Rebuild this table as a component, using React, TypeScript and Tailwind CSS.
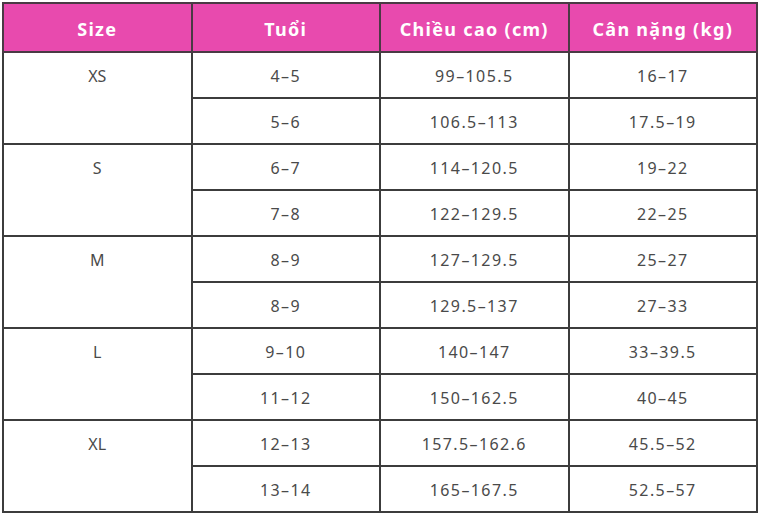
import React from "react";

const groups = [
  { size: "XS", rows: [["4-5", "99-105.5", "16-17"], ["5-6", "106.5-113", "17.5-19"]] },
  { size: "S", rows: [["6-7", "114-120.5", "19-22"], ["7-8", "122-129.5", "22-25"]] },
  { size: "M", rows: [["8-9", "127-129.5", "25-27"], ["8-9", "129.5-137", "27-33"]] },
  { size: "L", rows: [["9-10", "140-147", "33-39.5"], ["11-12", "150-162.5", "40-45"]] },
  { size: "XL", rows: [["12-13", "157.5-162.6", "45.5-52"], ["13-14", "165-167.5", "52.5-57"]] },
];

const headers = ["Size", "Tuổi", "Chiều cao (cm)", "Cân nặng (kg)"];

export default function App() {
  return (
    <div className="h-[514px] w-[763px] bg-white pl-[2px] pt-[2px]">
      <table className="w-[756px] table-fixed border-collapse font-['Noto_Sans',sans-serif]">
        <thead>
          <tr className="h-[49px] bg-[#e84aae]">
            {headers.map((h) => (
              <th
                key={h}
                className="border-2 border-[#4a3a44] pt-[3px] text-center text-[18px] font-bold tracking-[1.3px] text-white"
              >
                {h}
              </th>
            ))}
          </tr>
        </thead>
        <tbody>
          {groups.map((g) =>
            g.rows.map((r, i) => (
              <tr key={g.size + i} className="h-[46px]">
                {i === 0 ? (
                  <td
                    rowSpan={2}
                    className="h-[46px] border-2 border-[#3c3c3c] pt-[11px] text-center align-top text-[16px] text-[#4a4a4a]"
                  >
                    {g.size}
                  </td>
                ) : null}
                {r.map((c, j) => (
                  <td
                    key={j}
                    className="border-2 border-[#3c3c3c] pt-[2px] text-center text-[16px] tracking-[1.4px] text-[#4a4a4a]"
                  >
                    {c.replace(/-/g, "–")}
                  </td>
                ))}
              </tr>
            ))
          )}
        </tbody>
      </table>
    </div>
  );
}
